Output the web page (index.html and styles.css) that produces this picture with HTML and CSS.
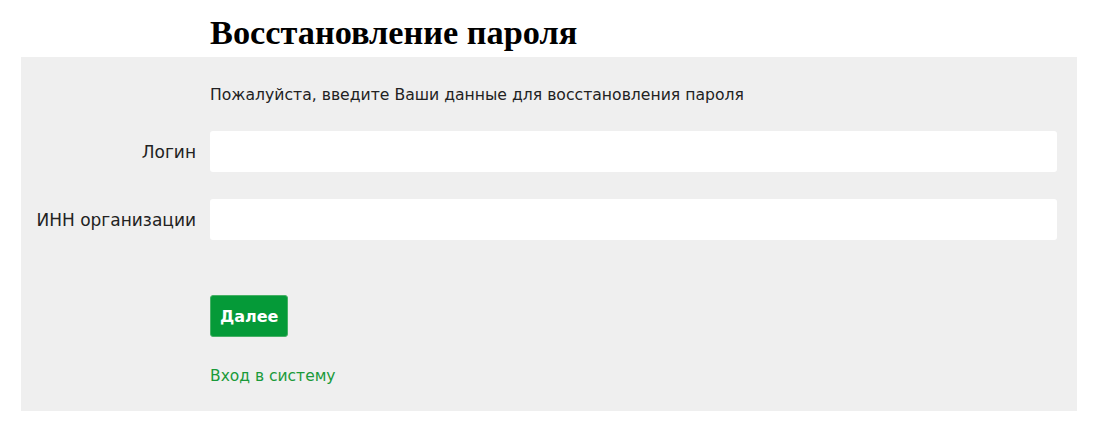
FILE: index.html
```html
<!DOCTYPE html>
<html lang="ru">
<head>
<meta charset="utf-8">
<link rel="stylesheet" href="styles.css">
</head>
<body>
<div class="page">
  <h1 class="title">Восстановление пароля</h1>
  <form class="panel">
    <p class="intro">Пожалуйста, введите Ваши данные для восстановления пароля</p>
    <div class="row">
      <label class="label" for="login">Логин</label>
      <input class="field" id="login" type="text">
    </div>
    <div class="row">
      <label class="label" for="inn">ИНН организации</label>
      <input class="field" id="inn" type="text">
    </div>
    <div class="actions">
      <button class="btn" type="button">Далее</button>
    </div>
    <div class="links">
      <a class="link" href="#">Вход в систему</a>
    </div>
  </form>
</div>
</body>
</html>
```
FILE: styles.css
```css
html, body {
  margin: 0;
  padding: 0;
  background: #ffffff;
}
body {
  font-family: "DejaVu Sans", Verdana, sans-serif;
  font-size: 15.5px;
  color: #222222;
}
.page {
  padding: 0 23px 0 21px;
}
.title {
  font-family: "Liberation Serif", "Times New Roman", serif;
  font-size: 34.3px;
  font-weight: bold;
  color: #000;
  margin: 0;
  padding: 7px 0 0 189px;
  line-height: 50px;
  height: 50px;
}
.panel {
  background: #efefef;
  padding: 28px 20px 25px 0;
  display: flex;
  flex-direction: column;
}
.intro {
  margin: 0 0 26px 189px;
  line-height: 20px;
  font-size: 15.65px;
}
.row {
  display: flex;
  align-items: center;
  gap: 14px;
  margin-bottom: 27px;
}
.label {
  width: 175px;
  text-align: right;
  flex: none;
  font-size: 17px;
  white-space: nowrap;
}
.field {
  flex: 1;
  height: 41px;
  box-sizing: border-box;
  border: none;
  border-radius: 3px;
  background: #fff;
  margin: 0;
}
.actions {
  margin: 28px 0 0 189px;
}
.btn {
  font-family: "DejaVu Sans", Verdana, sans-serif;
  font-size: 16px;
  font-weight: bold;
  color: #fff;
  background: #059a38;
  border: 1px solid #46b065;
  border-radius: 3px;
  height: 42px;
  padding: 0 9px;
}
.links {
  margin: 29px 0 0 189px;
  line-height: 20px;
}
.link {
  color: #1a9a3a;
  text-decoration: none;
  font-size: 15.5px;
}
```
